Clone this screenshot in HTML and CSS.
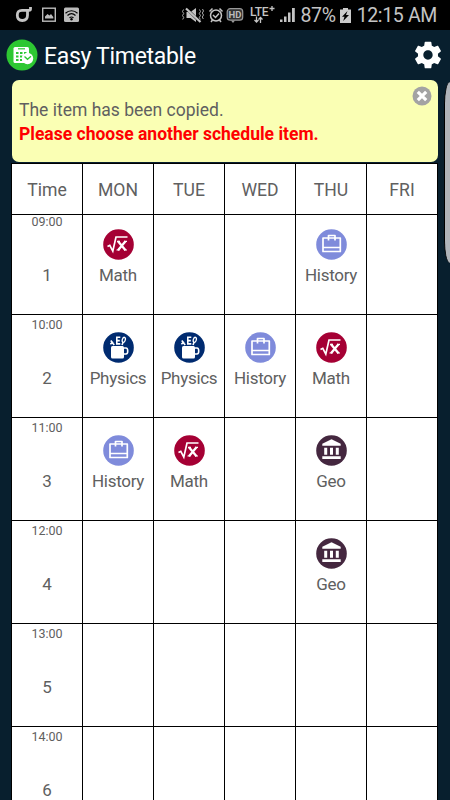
FILE: index.html
```
<!DOCTYPE html>
<html lang="en">

<head>
  <meta charset="utf-8">
  <title>Easy Timetable</title>
  <link rel="stylesheet" href="styles.css">
</head>

<body>
  <svg class="defs">
    <symbol id="math" viewBox="0 0 31 31">
      <circle cx="15.5" cy="15.5" r="15.3" fill="#a50034" />
      <path d="M4.5 17.5l2.300-1.200 3 5.800L13 8h11.500" fill="none" stroke="#fff" stroke-width="1.700" />
      <path d="M15 12.200l7.500 9M22.500 12.200l-7.500 9" fill="none" stroke="#fff" stroke-width="2.300" />
      <path d="M14 12.300h3M21 12.300h3M13.500 21h3M21 21h3" stroke="#fff" stroke-width="1.200" />
    </symbol>
    <symbol id="history" viewBox="0 0 31 31">
      <circle cx="15.5" cy="15.5" r="15.3" fill="#7f8bdb" />
      <path d="M7 9h17.300v13.500H7zM7 18.500h17.300M12.500 11.500V6.500h6.500v5" fill="none" stroke="#fff" stroke-width="1.700" stroke-linejoin="round" />
    </symbol>
    <symbol id="physics" viewBox="0 0 31 31">
      <circle cx="15.5" cy="15.5" r="15.3" fill="#002b70" />
      <rect x="8" y="14" width="13" height="12.500" rx="1.500" fill="#fff" />
      <path d="M20.500 16h2.500c2.300 0 2.300 6 0 6h-2.500" fill="none" stroke="#fff" stroke-width="1.600" />
      <path d="M11.200 13L7.800 8.500M7.300 12l3-1.800M17.300 5.300h-3.500v6.600h3.500M13.800 8.600h3M19 13l1.200-3" fill="none" stroke="#fff" stroke-width="1.600" />
      <ellipse cx="20.800" cy="7.800" rx="1.500" ry="2.600" transform="rotate(15 20.800 7.800)" fill="none" stroke="#fff" stroke-width="1.300" />
    </symbol>
    <symbol id="geo" viewBox="0 0 31 31">
      <circle cx="15.5" cy="15.5" r="15.3" fill="#44273f" />
      <path d="M6.300 10.800v-2l9.200-4.500 9.200 4.500v2zM8.200 12.700h3v7h-3zM14 12.700h3v7h-3zM19.800 12.700h3v7h-3zM6.300 21.200h18.400v2.700H6.300z" fill="#fff" />
    </symbol>
  </svg>

  <div class="status-bar">
    <svg class="status-left" width="66" height="18" viewBox="0 0 66 18">
      <path d="M16.500 1v2c0 1-.5 1.300-1.500 1.300H8C4.500 4.300 3.300 6 3.300 9.300s1.200 5.200 5 5.200 5.200-1.900 5.200-5.200V4.500" fill="none" stroke="#c4c4c4" stroke-width="2.800" />
      <rect x="28.700" y="2.200" width="12.600" height="13" fill="none" stroke="#bbb" stroke-width="1.400" />
      <path d="M31 12.500V10.500l2.500-2.500 2 1.500L37 8l2.300 3v1.500z" fill="#bbb" />
      <rect x="50" y="1.500" width="15" height="14.500" rx="1.500" fill="#bbb" />
      <path d="M51.500 7.200c3.500-3.300 8.500-3.300 12 0M53.500 9.500c2.500-2.200 5.500-2.200 8 0M55.500 11.800c1.500-1.200 2.500-1.200 4 0" fill="none" stroke="#000" stroke-width="1.200" />
      <circle cx="57.500" cy="13.300" r="1.200" />
    </svg>
    <div class="status-right">
      <svg width="62" height="18" viewBox="0 0 62 18">
        <path d="M4.500 6h4l5.500-4v14l-5.500-4h-4z" fill="#c4c4c4" />
        <path d="M3.500 1.500L17 15" stroke="#000" stroke-width="2.500" />
        <path d="M4 2.500L18.500 16" stroke="#c4c4c4" stroke-width="2.200" />
        <path d="M1.500 3.500l-1 2 1.200 2-1.200 2 1.200 2-1 2M17.500 3.500l1 2-1.200 2 1.200 2-1.200 2 1 2M20.500 3l1 2-1.200 2 1.200 2-1.200 2 1 2" fill="none" stroke="#aaa" />
        <circle cx="34" cy="9.500" r="5.500" fill="none" stroke="#c4c4c4" stroke-width="1.500" />
        <path d="M31 9l2.500 2.500L37 7.500M27.500 5.500l3-3M40.500 5.500l-3-3M30.500 14l-1.500 2M37.500 14l1.500 2" fill="none" stroke="#c4c4c4" stroke-width="1.500" />
        <rect x="45.200" y="2.700" width="15.500" height="11.500" rx="3" fill="#333" stroke="#999" stroke-width="1.200" />
        <path d="M49 14.500l2 2.500 2-2.500" fill="#999" />
        <text class="hd" x="46.500" y="12">HD</text>
      </svg>
      <svg class="lte" width="26" height="20" viewBox="0 0 26 20">
        <text class="lte-text" x="0" y="10.500">LTE</text>
        <path d="M19.500 3.500h5M22 1v5M6.500 11.500v6M4.500 15l2 2 2-2M10.500 18v-6M8.500 14.500l2-2 2 2" fill="none" stroke="#c4c4c4" stroke-width="1.300" />
      </svg>
      <svg width="16" height="16" viewBox="0 0 16 16">
        <path d="M0 12.500h2.500V15H0zM4 9.500h2.500V15H4zM8 5.500h2.500V15H8zM12 1h2.800v14H12z" fill="#c4c4c4" />
      </svg>
      <span class="percent">87%</span>
      <svg class="battery" width="11" height="17" viewBox="0 0 11 17">
        <path d="M3 1h5v1.500h3V16H0V2.500h3z" fill="#ccc" />
        <path d="M7.500 4L2 9.700h2.500L3.200 14 9 8H6z" fill="#000" />
      </svg>
      <span class="clock">12:15 AM</span>
    </div>
  </div>

  <div class="app-bar">
    <svg width="32" height="32" viewBox="0 0 32 32">
      <circle cx="16" cy="16" r="15.500" fill="#2dc732" />
      <rect x="7.500" y="8" width="15.500" height="16" rx="1.500" fill="#fff" />
      <path d="M12 9.800h7" stroke="#2dc732" stroke-width="1.200" />
      <path d="M10 13h2.500v2H10zM14 13h2.500v2H14zM18 13h2.500v2H18zM10 16.500h2.500v2H10zM14 16.500h2.500v2H14zM10 20h2.500v2H10zM14 20h2.500v2H14z" fill="#2dc732" />
      <circle cx="21.500" cy="19.500" r="5.700" fill="#fff" />
      <path d="M18.500 17.500l3 2.800 3.500-3" fill="none" stroke="#2dc732" stroke-width="1.300" />
    </svg>
    <h1>Easy Timetable</h1>
    <svg class="settings" width="32" height="32" viewBox="0 0 24 24">
      <path d="M19.430 12.980c.04-.32.07-.64.07-.98s-.03-.66-.07-.98l2.110-1.650c.19-.15.24-.42.12-.64l-2-3.460c-.12-.22-.39-.3-.61-.22l-2.490 1c-.52-.4-1.080-.73-1.690-.98l-.38-2.650C14.460 2.180 14.250 2 14 2h-4c-.25 0-.46.18-.49.42l-.38 2.650c-.61.25-1.170.59-1.690.98l-2.490-1c-.23-.09-.49 0-.61.22l-2 3.460c-.13.22-.07.49.12.64l2.110 1.650c-.04.32-.07.65-.07.98s.03.66.07.98l-2.110 1.650c-.19.15-.24.42-.12.64l2 3.460c.12.22.39.3.61.22l2.490-1c.52.4 1.080.73 1.690.98l.38 2.650c.03.24.24.42.49.42h4c.25 0 .46-.18.49-.42l.38-2.650c.61-.25 1.170-.59 1.690-.98l2.490 1c.23.09.49 0 .61-.22l2-3.460c.12-.22.07-.49-.12-.64l-2.110-1.650zM12 15.500c-1.930 0-3.500-1.570-3.500-3.500s1.570-3.500 3.500-3.500 3.500 1.570 3.500 3.500-1.570 3.500-3.500 3.500z" fill="#fff" />
    </svg>
  </div>

  <div class="notice">
    <p>The item has been copied.</p>
    <p class="warning">Please choose another schedule item.</p>
    <svg class="close" width="20" height="20" viewBox="0 0 20 20">
      <circle cx="10" cy="10" r="9.500" fill="#a3a3a3" />
      <path d="M5.800 5.800l8.400 8.400M14.200 5.800l-8.400 8.400" stroke="#fff" stroke-width="3.200" />
    </svg>
  </div>

  <div class="timetable">
    <div class="head">Time</div>
    <div class="head">MON</div>
    <div class="head">TUE</div>
    <div class="head">WED</div>
    <div class="head">THU</div>
    <div class="head">FRI</div>

    <div class="cell first period"><small>09:00</small><span>1</span></div>
    <div class="cell first"><svg><use href="#math" /></svg><span>Math</span></div>
    <div class="cell first"></div>
    <div class="cell first"></div>
    <div class="cell first"><svg><use href="#history" /></svg><span>History</span></div>
    <div class="cell first"></div>

    <div class="cell period"><small>10:00</small><span>2</span></div>
    <div class="cell"><svg><use href="#physics" /></svg><span>Physics</span></div>
    <div class="cell"><svg><use href="#physics" /></svg><span>Physics</span></div>
    <div class="cell"><svg><use href="#history" /></svg><span>History</span></div>
    <div class="cell"><svg><use href="#math" /></svg><span>Math</span></div>
    <div class="cell"></div>

    <div class="cell period"><small>11:00</small><span>3</span></div>
    <div class="cell"><svg><use href="#history" /></svg><span>History</span></div>
    <div class="cell"><svg><use href="#math" /></svg><span>Math</span></div>
    <div class="cell"></div>
    <div class="cell"><svg><use href="#geo" /></svg><span>Geo</span></div>
    <div class="cell"></div>

    <div class="cell period"><small>12:00</small><span>4</span></div>
    <div class="cell"></div>
    <div class="cell"></div>
    <div class="cell"></div>
    <div class="cell"><svg><use href="#geo" /></svg><span>Geo</span></div>
    <div class="cell"></div>

    <div class="cell period"><small>13:00</small><span>5</span></div>
    <div class="cell"></div>
    <div class="cell"></div>
    <div class="cell"></div>
    <div class="cell"></div>
    <div class="cell"></div>

    <div class="cell period"><small>14:00</small><span>6</span></div>
    <div class="cell"></div>
    <div class="cell"></div>
    <div class="cell"></div>
    <div class="cell"></div>
    <div class="cell"></div>
  </div>

  <div class="edge-handle"></div>
</body>

</html>
```
FILE: styles.css
```
* {
  box-sizing: border-box;
}

body {
  margin: 0;
  height: 800px;
  overflow: hidden;
  position: relative;
  background-color: #081f2e;
  font-family: Roboto, sans-serif;
  color: #606060;
}

.defs {
  display: none;
}

.status-bar {
  display: flex;
  justify-content: space-between;
  height: 30px;
  padding: 0 13px 0 14px;
  background-color: #000;
  color: #c4c4c4;
}

.status-left {
  margin-top: 6px;
}

.status-right {
  display: flex;
  align-items: center;
  font-size: 19.5px;
  letter-spacing: -0.35px;
}

.hd {
  font-size: 9.5px;
  font-weight: bold;
  letter-spacing: 0;
  fill: #bbb;
}

.lte {
  margin: 0 4px 0 6px;
}

.lte-text {
  font-size: 12px;
  font-weight: 500;
  letter-spacing: -0.3px;
  fill: #c4c4c4;
}

.percent {
  margin-left: 5px;
}

.battery {
  margin: 0 6px 0 4px;
}

.app-bar {
  display: flex;
  align-items: center;
  height: 50px;
  padding: 0 6px;
}

.app-bar h1 {
  flex: 1;
  margin: 2px 0 0 6px;
  font-size: 23px;
  font-weight: normal;
  letter-spacing: -0.3px;
  color: #fff;
}

.notice {
  position: relative;
  width: 426px;
  height: 82px;
  margin-left: 12px;
  padding: 18px 7px;
  border-radius: 7px;
  background-color: #faffb4;
  font-size: 17.5px;
  line-height: 24px;
}

.notice p {
  margin: 0;
}

.notice .warning {
  font-weight: bold;
  color: #f00;
}

.close {
  position: absolute;
  top: 6px;
  right: 6px;
}

.timetable {
  display: grid;
  grid-template-columns: repeat(6, 71px);
  grid-template-rows: 52px 100px repeat(5, 103px);
  width: 427px;
  margin: 1px 0 0 11px;
  border-left: 1px solid #000;
  font-size: 17px;
}

.head,
.cell {
  border-right: 1px solid #000;
  border-bottom: 1px solid #000;
  background-color: #fff;
}

.head {
  display: flex;
  align-items: center;
  justify-content: center;
  padding-top: 1px;
  border-top: 1px solid #000;
  font-size: 17.6px;
}

.cell {
  display: flex;
  flex-direction: column;
  align-items: center;
  padding-top: 17px;
  line-height: 20px;
  letter-spacing: -0.3px;
}

.cell.first {
  padding-top: 14px;
}

.cell svg {
  width: 31px;
  height: 31px;
  margin-bottom: 5px;
}

.cell.period {
  padding-top: 3px;
}

.cell.period.first {
  padding-top: 0;
  line-height: 19px;
}

.period small {
  margin-bottom: 36px;
  font-size: 12.5px;
  line-height: 14px;
  letter-spacing: 0;
}

.period.first small {
  margin-bottom: 37px;
}

.edge-handle {
  position: absolute;
  top: 82px;
  right: 0;
  width: 6px;
  height: 181px;
  border-left: 1px solid #000;
  border-radius: 6px 0 0 6px / 22px 0 0 22px;
  background-color: #b0b4ba;
}
```
